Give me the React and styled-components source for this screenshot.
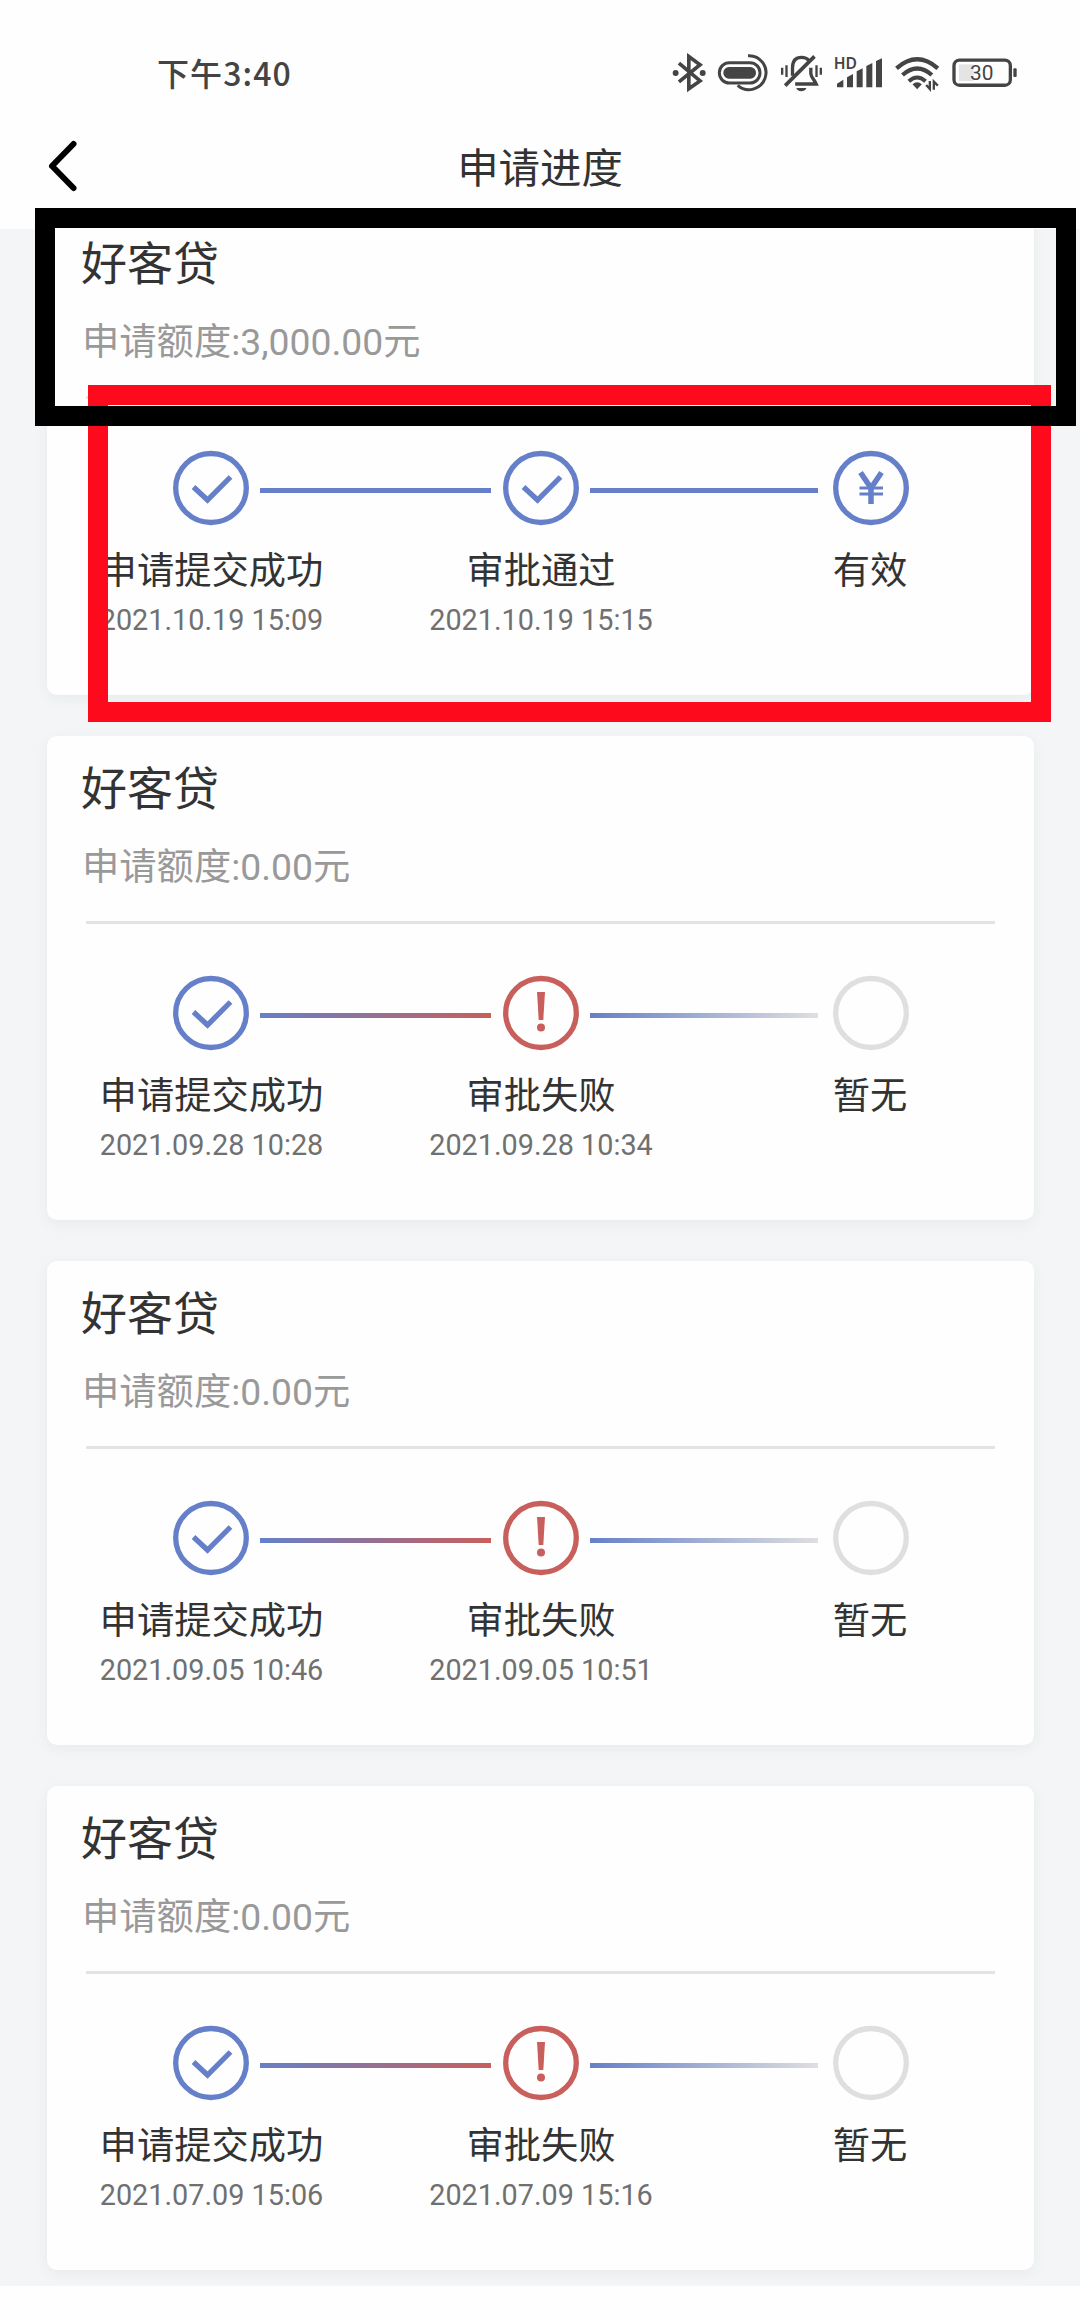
import React from 'react';
import styled, { createGlobalStyle } from 'styled-components';

const GlobalStyle = createGlobalStyle`
  * {
    box-sizing: border-box;
  }

  body {
    margin: 0;
    background: #fefefe;
    font-family: Roboto, 'Noto Sans CJK SC', sans-serif;
    color: #333;
  }
`;

const Screen = styled.div`
  position: relative;
  width: 1080px;
  height: 2320px;
  overflow: hidden;
  display: flex;
  flex-direction: column;
`;

const StatusBar = styled.div`
  display: flex;
  align-items: center;
  justify-content: space-between;
  height: 106px;
  padding: 40px 62px 0 157px;
  color: #444;
`;

const Clock = styled.span`
  margin-top: -3px;
  font-family: 'Noto Sans CJK SC', sans-serif;
  font-size: 32px;
  line-height: 40px;
  font-weight: 500;
  letter-spacing: 1.1px;
`;

const StatusIcons = styled.div`
  display: flex;
  align-items: center;
  gap: 10px;

  svg {
    display: block;
    height: 40px;
  }
`;

const NavBar = styled.div`
  display: grid;
  grid-template-columns: 120px 1fr 120px;
  align-items: center;
  height: 123px;
  padding-bottom: 3px;
`;

const BackButton = styled.button`
  border: none;
  background: none;
  padding: 0 0 0 46px;
  height: 56px;
  text-align: left;
  cursor: pointer;
`;

const NavTitle = styled.h1`
  margin: -3px 0 0;
  font-family: 'Noto Sans CJK SC', sans-serif;
  font-size: 41.4px;
  line-height: 60px;
  font-weight: 400;
  text-align: center;
`;

const Content = styled.main`
  height: 2057px;
  overflow: hidden;
  background: #f3f5f7;
`;

const CardList = styled.div`
  display: flex;
  flex-direction: column;
  gap: 41px;
  margin-top: -18px;
  padding: 0 46px 0 47px;
`;

const Card = styled.section`
  height: 484px;
  flex: none;
  background: #fefefe;
  border-radius: 10px;
  box-shadow: 0 4px 14px rgba(60, 80, 70, 0.06);
`;

const CardHeader = styled.header`
  height: 188px;
  margin: 0 39px;
  padding-top: 20px;
  border-bottom: 3px solid #e3e3e3;
`;

const ProductName = styled.h2`
  margin: 0 0 0 -5px;
  font-size: 46px;
  line-height: 66px;
  font-weight: 400;
`;

const Amount = styled.p`
  margin: 18px 0 0 -4px;
  font-size: 37.3px;
  line-height: 54px;
  color: #999;
`;

const Track = styled.div`
  display: flex;
  align-items: center;
  height: 76px;
  margin-top: 51px;
  padding-left: 126px;
`;

const StepIcon = styled.svg`
  flex: none;
  width: 76px;
  height: 76px;
  fill: none;
  stroke: ${props => props.color};
  stroke-width: 5.3;
`;

const Connector = styled.div`
  flex: none;
  width: ${props => props.$width}px;
  height: 5px;
  margin: 4px auto 0 11px;
  background: linear-gradient(to right, ${props => props.$from}, ${props => props.$to});
`;

const Step = styled.div`
  display: flex;
  align-items: center;
  flex: none;
  width: ${props => (props.$last ? 76 : 330)}px;
`;

const Labels = styled.div`
  display: grid;
  grid-template-columns: 329px 330px 1fr;
  margin-top: 17px;
  text-align: center;
`;

const StepLabel = styled.div`
  font-size: 37.3px;
  line-height: 56px;
`;

const StepTime = styled.div`
  margin-top: 1px;
  font-size: 28.8px;
  line-height: 40px;
  color: #707070;
`;

const Marker = styled.div`
  position: absolute;
  left: ${props => props.$box[0]}px;
  top: ${props => props.$box[1]}px;
  width: ${props => props.$box[2]}px;
  height: ${props => props.$box[3]}px;
  border: 20px solid ${props => props.$color};
`;

const BLUE = '#6580c8';
const RED = '#c85f5c';
const GREY = '#dfdfdf';

const colors = { done: BLUE, money: BLUE, failed: RED, empty: GREY };

const applications = [
  {
    amount: '3,000.00',
    steps: [
      { kind: 'done', label: '申请提交成功', time: '2021.10.19 15:09' },
      { kind: 'done', label: '审批通过', time: '2021.10.19 15:15' },
      { kind: 'money', label: '有效' },
    ],
  },
  {
    amount: '0.00',
    steps: [
      { kind: 'done', label: '申请提交成功', time: '2021.09.28 10:28' },
      { kind: 'failed', label: '审批失败', time: '2021.09.28 10:34' },
      { kind: 'empty', label: '暂无' },
    ],
  },
  {
    amount: '0.00',
    steps: [
      { kind: 'done', label: '申请提交成功', time: '2021.09.05 10:46' },
      { kind: 'failed', label: '审批失败', time: '2021.09.05 10:51' },
      { kind: 'empty', label: '暂无' },
    ],
  },
  {
    amount: '0.00',
    steps: [
      { kind: 'done', label: '申请提交成功', time: '2021.07.09 15:06' },
      { kind: 'failed', label: '审批失败', time: '2021.07.09 15:16' },
      { kind: 'empty', label: '暂无' },
    ],
  },
];

const StatusGlyphs = () => (
  <StatusIcons>
    {/* bluetooth */}
    <svg viewBox="92 38 106 120" width="35" fill="none" stroke="#444" strokeWidth="11">
      <path d="M113 68 L177 122 L143 146 V48 L177 73 L113 125" />
      <circle cx="103" cy="98" r="9" fill="#444" stroke="none" />
      <circle cx="185" cy="98" r="9" fill="#444" stroke="none" />
    </svg>
    {/* capsule */}
    <svg viewBox="230 38 156 120" width="52" fill="none" stroke="#444" strokeWidth="9">
      <rect x="237" y="67" width="122" height="61" rx="30" />
      <rect x="249" y="80" width="98" height="35" rx="17" fill="#444" stroke="none" />
      <path d="M323 46 A51 51 0 1 1 292 135" />
    </svg>
    {/* muted, vibrating bell */}
    <svg viewBox="418 38 134 120" width="45" fill="none" stroke="#444" strokeWidth="10">
      <path d="M436 136 L524 48" strokeWidth="11" />
      <path d="M458 106 V83 C458 60 470 51 485 51 C494 51 502 54 507 60" />
      <path d="M513 82 V100 C514 112 523 117 529 131 H466" />
      <path d="M469 143 H500 Q495 153 484 153 Q474 153 469 143 Z" fill="#444" stroke="none" />
      <path d="M427 82 V103 M440 75 V110 M530 75 V110 M543 82 V103" strokeWidth="7" />
    </svg>
    {/* mobile signal */}
    <svg viewBox="580 38 150 120" width="50" fill="#444">
      <text x="579" y="86" fontSize="47" fontWeight="600" fontFamily="Noto Sans, sans-serif">
        HD
      </text>
      <path d="M589 141 V130 L608 118 V141 Z M619 141 V111 L637 101 V141 Z M648 141 V93 L666 84 V141 Z M677 141 V77 L695 68 V141 Z M706 141 V62 L724 54 V141 Z" />
    </svg>
    {/* wifi */}
    <svg viewBox="758 38 140 120" width="47" fill="none" stroke="#444" strokeWidth="13">
      <path d="M765 84 Q827 30 889 84" />
      <path d="M783 104 Q827 65 871 104" />
      <path d="M802 123 Q827 100 852 123" strokeWidth="12" />
      <path d="M813 132 Q827 120 841 132 L827 147 Z" fill="#444" stroke="none" />
      <path d="M865 122 V146 L854 134 M877 148 V124 L889 136" strokeWidth="7" />
    </svg>
    {/* battery */}
    <svg viewBox="932 38 202 120" width="67" fill="none" stroke="#444">
      <rect x="956" y="72" width="44" height="50" fill="#e4e4e4" stroke="none" />
      <rect x="941" y="59" width="170" height="76" rx="17" strokeWidth="10" />
      <rect x="1120" y="84" width="10" height="26" rx="3" fill="#444" stroke="none" />
      <text x="989" y="120" fontSize="63" fill="#444" stroke="none" fontFamily="Roboto, sans-serif">
        30
      </text>
    </svg>
  </StatusIcons>
);

const StepMark = ({ kind }) => (
  <StepIcon viewBox="0 0 76 76" color={colors[kind]}>
    <ellipse cx="38" cy="38" rx="35.3" ry="34.5" />
    {kind === 'done' && <path d="M20.5 37 L34.5 50 L57.5 27" />}
    {kind === 'money' && (
      <>
        <path d="M27.5 22.5 L38 38 L48.5 22.5 M38 37 V54" strokeWidth="5.5" />
        <path d="M26.5 38 H50 M26.5 44 H50" strokeWidth="3.2" />
      </>
    )}
    {kind === 'failed' && (
      <>
        <path d="M34 17 H42 L40.3 45 H35.7 Z" fill={RED} stroke="none" />
        <circle cx="38" cy="52.5" r="4" fill={RED} stroke="none" />
      </>
    )}
  </StepIcon>
);

// the line takes its end colour from the step it leads to
const connectorColors = kind => {
  if (kind === 'failed') return [BLUE, RED];
  if (kind === 'empty') return [BLUE, GREY];
  return [BLUE, BLUE];
};

const ApplicationCard = ({ amount, steps }) => (
  <Card>
    <CardHeader>
      <ProductName>好客贷</ProductName>
      <Amount>申请额度:{amount}元</Amount>
    </CardHeader>
    <Track>
      {steps.map((step, i) => {
        const next = steps[i + 1];
        const [from, to] = connectorColors(next?.kind);
        return (
          <Step key={step.label} $last={!next}>
            <StepMark kind={step.kind} />
            {next && <Connector $width={i === 0 ? 231 : 228} $from={from} $to={to} />}
          </Step>
        );
      })}
    </Track>
    <Labels>
      {steps.map(step => (
        <div key={step.label}>
          <StepLabel>{step.label}</StepLabel>
          {step.time && <StepTime>{step.time}</StepTime>}
        </div>
      ))}
    </Labels>
  </Card>
);

const App = () => (
  <>
    <GlobalStyle />
    <Screen>
      <StatusBar>
        <Clock>下午3:40</Clock>
        <StatusGlyphs />
      </StatusBar>
      <NavBar>
        <BackButton aria-label="返回">
          <svg width="32" height="56" viewBox="0 0 32 56" fill="none" stroke="#000" strokeWidth="6">
            <path d="M27.5 6 L6 28 L27.5 50" strokeLinecap="round" strokeLinejoin="round" />
          </svg>
        </BackButton>
        <NavTitle>申请进度</NavTitle>
      </NavBar>
      <Content>
        <CardList>
          {applications.map(item => (
            <ApplicationCard key={item.steps[0].time} {...item} />
          ))}
        </CardList>
      </Content>
      {/* highlight frames over the first card, black on top of red */}
      <Marker $color="#fd0a1c" $box={[88, 385, 963, 337]} />
      <Marker $color="#000" $box={[35, 208, 1041, 218]} />
    </Screen>
  </>
);

export default App;
